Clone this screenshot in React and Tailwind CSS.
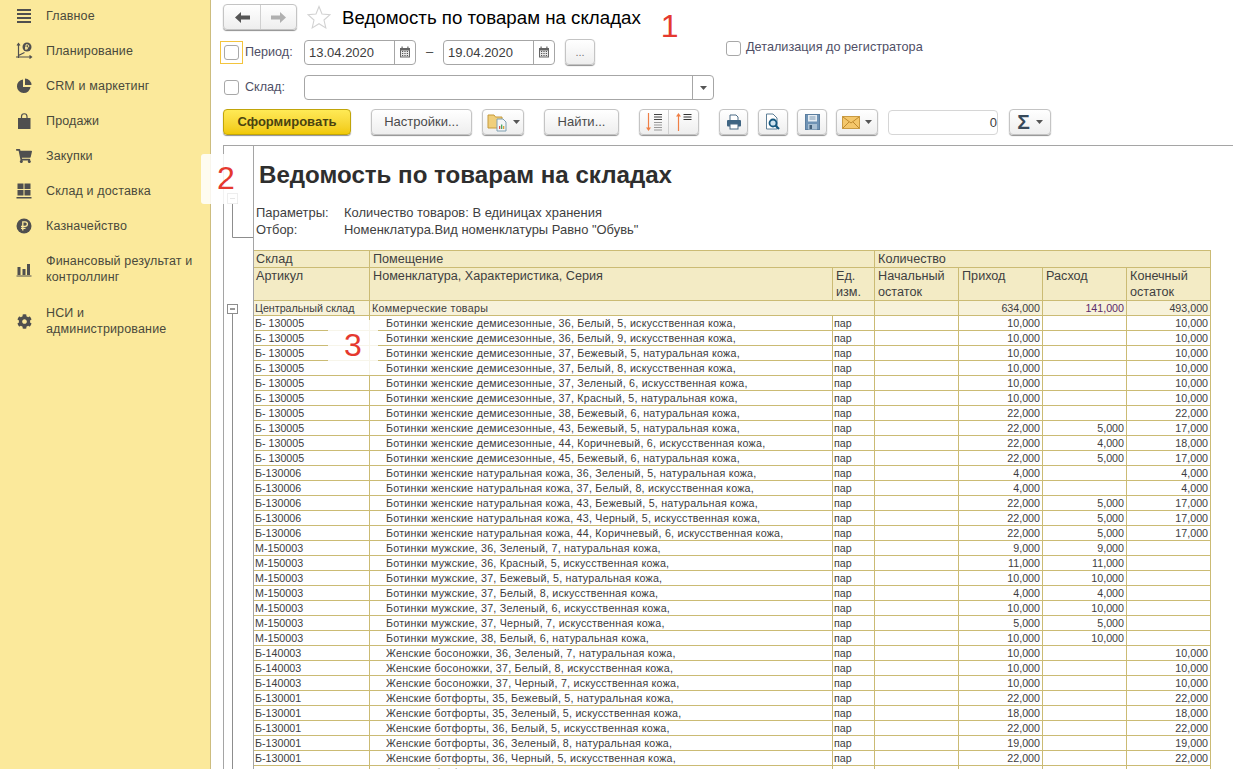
import React from "react";
import { FaShoppingCart, FaCog } from "react-icons/fa";

const IC = "#4f4f4f";

const IconMenu = () => (
  <svg width="16" height="16" viewBox="0 0 16 16" fill={IC}>
    <rect x="1" y="1" width="14" height="2" /><rect x="1" y="5" width="14" height="2" />
    <rect x="1" y="9" width="14" height="2" /><rect x="1" y="13" width="14" height="2" />
  </svg>
);
const IconPlan = () => (
  <svg width="18" height="18" viewBox="0 0 18 18" fill="none" stroke={IC} strokeWidth="1.2">
    <path d="M3.5 2v14M1 15h15M2 3.5l1.500-2 1.500 2M14.500 13.500l2 1.500-2 1.500M3.500 13.500l6-3" />
    <circle cx="12" cy="5" r="4.500" fill={IC} stroke="none" />
    <path d="M11 8V2.800h1.500a1.200 1.200 0 0 1 0 2.600H10M10 6.700h3" stroke="#FBE99B" strokeWidth="1" />
  </svg>
);
const IconPie = () => (
  <svg width="16" height="16" viewBox="0 0 16 16" fill={IC}>
    <path d="M7 1.500A6.800 6.800 0 1 0 14.500 9H7z" /><path d="M9 0.500A6.500 6.500 0 0 1 15.500 7H9z" />
  </svg>
);
const IconBag = () => (
  <svg width="16" height="16" viewBox="0 0 16 16" fill={IC}>
    <path d="M2 5h12.500v11H2z" /><path d="M5.500 6V3.500a2.700 2.700 0 0 1 5.500 0V6" fill="none" stroke={IC} strokeWidth="1.200" />
  </svg>
);
const IconGrid = () => (
  <svg width="16" height="16" viewBox="0 0 16 16" fill={IC}>
    <rect x="1.500" y="0.500" width="6" height="5.500" /><rect x="8.500" y="0.500" width="6" height="5.500" />
    <rect x="1.500" y="7" width="6" height="5.500" /><rect x="8.500" y="7" width="6" height="5.500" />
    <rect x="0.500" y="14" width="15" height="1.500" />
  </svg>
);
const IconRub = () => (
  <svg width="16" height="16" viewBox="0 0 16 16">
    <circle cx="8" cy="8" r="7.500" fill={IC} />
    <path d="M6.800 12.500V3.800h2.300a2.300 2.300 0 0 1 0 4.600H5M5 10.300h4.500" fill="none" stroke="#FBE99B" strokeWidth="1.300" />
  </svg>
);
const IconBars = () => (
  <svg width="16" height="16" viewBox="0 0 16 16" fill={IC}>
    <rect x="1.500" y="6" width="3" height="8" /><rect x="6.500" y="8" width="3" height="6" />
    <rect x="11" y="3" width="3" height="11" /><rect x="0.500" y="14.500" width="15" height="1" />
  </svg>
);

const menu = [
  { t: ["Главное"], i: <IconMenu /> },
  { t: ["Планирование"], i: <IconPlan /> },
  { t: ["CRM и маркетинг"], i: <IconPie /> },
  { t: ["Продажи"], i: <IconBag /> },
  { t: ["Закупки"], i: <FaShoppingCart size={16} color={IC} /> },
  { t: ["Склад и доставка"], i: <IconGrid /> },
  { t: ["Казначейство"], i: <IconRub /> },
  { t: ["Финансовый результат и", "контроллинг"], i: <IconBars /> },
  { t: ["НСИ и", "администрирование"], i: <FaCog size={15} color={IC} />, c: "mt-[1px]" },
];

const BTN = "flex items-center justify-center h-[26px] bg-linear-to-b from-white to-[#eeeeee] border border-[#c4c4c4] rounded-[4px] shadow-[0_1px_1px_#8f8f8f] text-[#4a4a4a] text-[13px]";

const Caret = () => (
  <svg width="7" height="4" viewBox="0 0 7 4" className="shrink-0"><path d="M0 0h7L3.500 4z" fill="#555" /></svg>
);
const Check = () => <span className="block w-[15px] h-[15px] border border-[#a8a8a8] rounded-[3px] bg-white" />;
const Cal = () => (
  <svg width="12" height="12" viewBox="0 0 12 12">
    <rect x="1" y="2" width="10" height="9.500" fill="#666" />
    <rect x="2.500" y="0.500" width="1.200" height="2.500" fill="#666" /><rect x="8.300" y="0.500" width="1.200" height="2.500" fill="#666" />
    <rect x="2" y="4.500" width="8" height="6" fill="#e8e8e8" />
    <path d="M3 5.500h1.200M5.400 5.500h1.200M7.800 5.500H9M3 7.500h1.200M5.400 7.500h1.200M7.800 7.500H9M3 9.500h1.200M5.400 9.500h1.200M7.800 9.500H9" stroke="#555" />
  </svg>
);
const DateField = ({ v }) => (
  <div className="flex h-[25px] w-[112px] border border-[#a6a6a6] rounded-[4px] bg-white">
    <span className="flex-1 pl-[4px] text-[13px] leading-[23px] text-[#3c3c3c]">{v}</span>
    <span className="w-[21px] flex items-center justify-center border-l border-[#a6a6a6]"><Cal /></span>
  </div>
);

const IconFolder = () => (
  <svg width="22" height="20" viewBox="0 0 22 20">
    <path d="M1 3h6l1.500 2H15v11H1z" fill="#f0cf7c" stroke="#c69a3a" />
    <path d="M10 7h6l3 3v9h-9z" fill="#f4f6f8" stroke="#7e9fb0" />
    <rect x="12" y="14" width="1.300" height="3" fill="#d9534f" /><rect x="14" y="12.500" width="1.300" height="4.500" fill="#4aa564" /><rect x="16" y="14" width="1.300" height="3" fill="#d9a03a" />
  </svg>
);
const SortDown = () => (
  <svg width="20" height="20" viewBox="0 0 20 20">
    <path d="M4.500 1v16" stroke="#ef7f45" strokeWidth="1.200" /><path d="M2 15.500h5L4.500 19z" fill="#ef7f45" />
    <path d="M10 2.500h8M10 5h8M10 7.500h8" stroke="#444" /><path d="M10 10.500h8M10 13h8M10 15.500h8M10 18h8" stroke="#999" />
  </svg>
);
const SortUp = () => (
  <svg width="20" height="20" viewBox="0 0 20 20">
    <path d="M4.500 3v16" stroke="#ef7f45" strokeWidth="1.200" /><path d="M2 4.500h5L4.500 1z" fill="#ef7f45" />
    <path d="M9.500 2.500h8M9.500 5h8M9.500 7.500h8" stroke="#333" />
  </svg>
);
const IconPrint = () => (
  <svg width="16" height="16" viewBox="0 0 16 16">
    <path d="M4 1h6l2 2v4H4z" fill="#fff" stroke="#4b6b85" />
    <rect x="1" y="6" width="14" height="6.500" rx="1" fill="#3f6583" />
    <rect x="4" y="10" width="8" height="5" fill="#fff" stroke="#4b6b85" />
  </svg>
);
const IconPreview = () => (
  <svg width="16" height="18" viewBox="0 0 16 18">
    <path d="M1.500 1H8l4 4v11H1.500z" fill="#fff" stroke="#5d7f97" />
    <circle cx="8" cy="10" r="3.500" fill="#cfe3ef" stroke="#14577f" strokeWidth="1.800" />
    <path d="M10.500 12.500l3.500 3.500" stroke="#14577f" strokeWidth="2.200" />
  </svg>
);
const IconSave = () => (
  <svg width="15" height="16" viewBox="0 0 15 16">
    <rect x="0.500" y="0.500" width="14" height="15" fill="#6f93b5" stroke="#5b7e9f" />
    <rect x="3" y="1" width="9" height="6.500" fill="#e6edf3" /><path d="M4.500 3h6M4.500 5h6" stroke="#7e9ab3" />
    <rect x="3" y="10" width="9" height="5.500" fill="#a9c0d4" /><rect x="4.500" y="11" width="2.500" height="4" fill="#44607a" />
  </svg>
);
const IconMail = () => (
  <svg width="18" height="13" viewBox="0 0 18 13">
    <rect x="0.500" y="0.500" width="17" height="12" fill="#f4c76b" stroke="#c99a41" />
    <path d="M1 1l8 6 8-6M1 12l6-6M17 12l-6-6" fill="none" stroke="#bf8a2f" />
  </svg>
);

const ROWS = (() => {
  const d = "Ботинки женские демисезонные, ";
  const n = "Ботинки женские натуральная кожа, ";
  const m = "Ботинки мужские, ";
  const s = "Женские босоножки, ";
  const b = "Женские ботфорты, ";
  const B5 = "Б- 130005", B6 = "Б-130006", M = "М-150003", B4 = "Б-140003", B1 = "Б-130001";
  return [
    [B5, d + "36, Белый, 5, искусственная кожа,", "10,000", "", "10,000"],
    [B5, d + "36, Белый, 9, искусственная кожа,", "10,000", "", "10,000"],
    [B5, d + "37, Бежевый, 5, натуральная кожа,", "10,000", "", "10,000"],
    [B5, d + "37, Белый, 8, искусственная кожа,", "10,000", "", "10,000"],
    [B5, d + "37, Зеленый, 6, искусственная кожа,", "10,000", "", "10,000"],
    [B5, d + "37, Красный, 5, натуральная кожа,", "10,000", "", "10,000"],
    [B5, d + "38, Бежевый, 6, натуральная кожа,", "22,000", "", "22,000"],
    [B5, d + "43, Бежевый, 5, натуральная кожа,", "22,000", "5,000", "17,000"],
    [B5, d + "44, Коричневый, 6, искусственная кожа,", "22,000", "4,000", "18,000"],
    [B5, d + "45, Бежевый, 6, натуральная кожа,", "22,000", "5,000", "17,000"],
    [B6, n + "36, Зеленый, 5, натуральная кожа,", "4,000", "", "4,000"],
    [B6, n + "37, Белый, 8, искусственная кожа,", "4,000", "", "4,000"],
    [B6, n + "43, Бежевый, 5, натуральная кожа,", "22,000", "5,000", "17,000"],
    [B6, n + "43, Черный, 5, искусственная кожа,", "22,000", "5,000", "17,000"],
    [B6, n + "44, Коричневый, 6, искусственная кожа,", "22,000", "5,000", "17,000"],
    [M, m + "36, Зеленый, 7, натуральная кожа,", "9,000", "9,000", ""],
    [M, m + "36, Красный, 5, искусственная кожа,", "11,000", "11,000", ""],
    [M, m + "37, Бежевый, 5, натуральная кожа,", "10,000", "10,000", ""],
    [M, m + "37, Белый, 8, искусственная кожа,", "4,000", "4,000", ""],
    [M, m + "37, Зеленый, 6, искусственная кожа,", "10,000", "10,000", ""],
    [M, m + "37, Черный, 7, искусственная кожа,", "5,000", "5,000", ""],
    [M, m + "38, Белый, 6, натуральная кожа,", "10,000", "10,000", ""],
    [B4, s + "36, Зеленый, 7, натуральная кожа,", "10,000", "", "10,000"],
    [B4, s + "37, Белый, 8, искусственная кожа,", "10,000", "", "10,000"],
    [B4, s + "37, Черный, 7, искусственная кожа,", "10,000", "", "10,000"],
    [B1, b + "35, Бежевый, 5, натуральная кожа,", "22,000", "", "22,000"],
    [B1, b + "35, Зеленый, 5, искусственная кожа,", "18,000", "", "18,000"],
    [B1, b + "36, Белый, 5, искусственная кожа,", "22,000", "", "22,000"],
    [B1, b + "36, Зеленый, 8, натуральная кожа,", "19,000", "", "19,000"],
    [B1, b + "36, Черный, 5, искусственная кожа,", "22,000", "", "22,000"],
    [B1, b + "37, Белый, 5, искусственная кожа,", "22,000", "", "22,000"],
  ];
})();

const CELL = "h-[15px] p-0 border-r border-b border-[#cbbb74] text-[10.7px] leading-[14px] text-[#3d3d3d] whitespace-nowrap overflow-hidden";
const HEAD = "p-0 pr-[2px] border-r border-b border-[#cbbb74] bg-[#f3ebc5] text-[12.65px] text-[#3f3f3f] align-top font-normal text-left";
const H1 = HEAD + " border-t pt-[1px] leading-[15px]";
const H2 = HEAD + " leading-[16px]";

export default function App() {
  return (
    <div className="relative flex w-[1233px] h-[769px] overflow-hidden bg-white font-['Liberation_Sans',Arial,sans-serif]">
      {/* sidebar */}
      <nav className="w-[211px] shrink-0 bg-[#fbe99b] border-r border-[#cdbd7f] pt-[8px] flex flex-col gap-[19px]">
        {menu.map((m) => (
          <div key={m.t[0]} className={"flex items-center " + (m.c || "")}>
            <span className="w-[46px] h-[16px] pl-[2px] flex items-center justify-center shrink-0">{m.i}</span>
            <span className="text-[12.5px] tracking-[0.15px] leading-[16px] text-[#4a4a3c]">
              {m.t.map((l) => <span key={l} className="block whitespace-nowrap">{l}</span>)}
            </span>
          </div>
        ))}
      </nav>

      {/* main */}
      <main className="flex-1 min-w-0 flex flex-col">
        <div className="flex items-center h-[24px] mt-[5px] ml-[12px]">
          <div className={BTN + " w-[74px] h-[24px] !justify-start"}>
            <span className="w-[37px] flex justify-center border-r border-[#d0d0d0] h-full items-center">
              <svg width="15" height="11" viewBox="0 0 15 11"><path d="M6 0v3.500h9v4H6V11L0 5.500z" fill="#555" /></svg>
            </span>
            <span className="flex-1 flex justify-center">
              <svg width="15" height="11" viewBox="0 0 15 11"><path d="M9 0v3.500H0v4h9V11l6-5.500z" fill="#b0b0b0" /></svg>
            </span>
          </div>
          <svg width="24" height="24" viewBox="0 0 24 24" className="ml-[10px]">
            <path d="M12 1.500l3 7.500 8 .7-6 5.300 1.800 7.900L12 18.700 5.200 22.900 7 15 1 9.700l8-.7z" fill="#fff" stroke="#d2d2d2" strokeWidth="1.100" />
          </svg>
          <h1 className="ml-[11px] mt-[2px] text-[18.7px] font-normal text-black whitespace-nowrap">Ведомость по товарам на складах</h1>
          <span className="ml-[20px] mt-[18px] text-[32px] leading-[32px] text-[#e5392f]">1</span>
        </div>

        <div className="flex items-center h-[26px] mt-[10px] ml-[9px] relative">
          <span className="w-[23px] h-[23px] flex items-center justify-center border border-[#f3c43d]"><Check /></span>
          <span className="ml-[2px] w-[59px] text-[12.6px] text-[#4f4f66]">Период:</span>
          <DateField v="13.04.2020" />
          <span className="w-[27px] text-center text-[13px] text-[#444]">–</span>
          <DateField v="19.04.2020" />
          <span className={BTN + " ml-[10px] w-[30px] text-[#777] !text-[11px]"}>...</span>
          <span className="ml-[131px] -mt-[8px]"><Check /></span>
          <span className="ml-[5px] -mt-[8px] text-[12.7px] text-[#4f4f66] whitespace-nowrap">Детализация до регистратора</span>
        </div>

        <div className="flex items-center h-[25px] mt-[10px] ml-[13px]">
          <Check />
          <span className="ml-[6px] w-[59px] text-[12.6px] text-[#4f4f66]">Склад:</span>
          <div className="flex h-[25px] w-[410px] border border-[#a6a6a6] rounded-[4px] bg-white">
            <span className="flex-1" />
            <span className="w-[21px] flex items-center justify-center border-l border-[#a6a6a6]"><Caret /></span>
          </div>
        </div>

        <div className="flex items-center h-[26px] mt-[9px] ml-[12px]">
          <span className="flex items-center justify-center h-[26px] w-[128px] bg-linear-to-b from-[#ffea55] to-[#f1c900] border border-[#c1a50a] rounded-[4px] shadow-[0_1px_1px_#8f8f8f] text-[13px] font-bold text-[#4a4310]">Сформировать</span>
          <span className={BTN + " ml-[20px] w-[101px]"}>Настройки...</span>
          <span className={BTN + " ml-[10px] w-[42px] gap-[4px]"}><IconFolder /><Caret /></span>
          <span className={BTN + " ml-[20px] w-[75px]"}>Найти...</span>
          <span className={BTN + " ml-[20px] w-[60px]"}>
            <span className="w-[30px] h-full flex items-center justify-center border-r border-[#d0d0d0]"><SortDown /></span>
            <span className="w-[30px] flex justify-center"><SortUp /></span>
          </span>
          <span className={BTN + " ml-[20px] w-[29px]"}><IconPrint /></span>
          <span className={BTN + " ml-[10px] w-[30px]"}><IconPreview /></span>
          <span className={BTN + " ml-[9px] w-[30px]"}><IconSave /></span>
          <span className={BTN + " ml-[9px] w-[42px] gap-[5px]"}><IconMail /><Caret /></span>
          <span className="ml-[10px] w-[110px] h-[25px] border border-[#d6d6d6] rounded-[4px] text-right text-[13px] leading-[23px] text-[#3c3c3c]">0</span>
          <span className={BTN + " ml-[11px] w-[42px] gap-[6px]"}>
            <span className="text-[21px] leading-[24px] font-bold text-[#37495a]">Σ</span><Caret />
          </span>
        </div>

        {/* report */}
        <div className="flex-1 min-h-0 mt-[10px] ml-[12px] flex border-l border-t border-[#a5a5a5] overflow-hidden">
          <div className="w-[30px] shrink-0 border-r border-[#a5a5a5]">
            <svg width="29" height="640" viewBox="0 0 29 640" fill="none">
              <rect x="3.500" y="47.500" width="10" height="10" fill="#fff" stroke="#8d8d8d" />
              <path d="M6 52.500h5" stroke="#555" />
              <path d="M8.500 58v33.500H29" stroke="#8d8d8d" />
              <rect x="3.500" y="158.500" width="10" height="9" fill="#fff" stroke="#8d8d8d" />
              <path d="M6 163h5" stroke="#333" />
              <path d="M8.500 168v472" stroke="#8d8d8d" />
            </svg>
          </div>
          <div className="flex-1 min-w-0">
            <h2 className="mt-[16px] ml-[5px] text-[24.1px] leading-[26px] font-bold text-[#2e2e2e] whitespace-nowrap">Ведомость по товарам на складах</h2>
            <div className="mt-[16px] ml-[2px] text-[12.95px] leading-[17px] text-[#3f3f3f]">
              <div className="flex"><span className="w-[88px]">Параметры:</span><span>Количество товаров: В единицах хранения</span></div>
              <div className="flex"><span className="w-[88px]">Отбор:</span><span>Номенклатура.Вид номенклатуры Равно "Обувь"</span></div>
            </div>
            <table className="mt-[12px] table-fixed w-[957px] border-separate border-spacing-0">
              <colgroup>
                <col className="w-[116px]" /><col className="w-[463px]" /><col className="w-[42px]" />
                <col className="w-[84px]" /><col className="w-[84px]" /><col className="w-[84px]" /><col className="w-[84px]" />
              </colgroup>
              <thead>
                <tr>
                  <th className={H1 + " h-[18px] pl-[2px]"}>Склад</th>
                  <th className={H1 + " pl-[3px]"} colSpan={2}>Помещение</th>
                  <th className={H1 + " pl-[3px]"} colSpan={4}>Количество</th>
                </tr>
                <tr>
                  <th className={H2 + " h-[33px] pl-[2px]"}>Артикул</th>
                  <th className={H2 + " pl-[3px]"}>Номенклатура, Характеристика, Серия</th>
                  <th className={H2 + " pl-[3px]"}>Ед. изм.</th>
                  <th className={H2 + " pl-[3px]"}>Начальный остаток</th>
                  <th className={H2 + " pl-[3px]"}>Приход</th>
                  <th className={H2 + " pl-[3px]"}>Расход</th>
                  <th className={H2 + " pl-[3px]"}>Конечный остаток</th>
                </tr>
              </thead>
              <tbody>
                <tr className="bg-[#f7f2da]">
                  <td className={CELL + " pl-[1px]"}>Центральный склад</td>
                  <td className={CELL + " pl-[2px] tracking-[0.28px]"} colSpan={2}>Коммерческие товары</td>
                  <td className={CELL} />
                  <td className={CELL + " text-right pr-[2px]"}>634,000</td>
                  <td className={CELL + " text-right pr-[2px] !text-[#5b2a6a]"}>141,000</td>
                  <td className={CELL + " text-right pr-[2px]"}>493,000</td>
                </tr>
                {ROWS.map((r, i) => (
                  <tr key={i}>
                    <td className={CELL + " pl-[1px]"}>{r[0]}</td>
                    <td className={CELL + " pl-[16px] tracking-[0.23px]"}>{r[1]}</td>
                    <td className={CELL + " pl-[1px]"}>пар</td>
                    <td className={CELL} />
                    <td className={CELL + " text-right pr-[2px]"}>{r[2]}</td>
                    <td className={CELL + " text-right pr-[2px]"}>{r[3]}</td>
                    <td className={CELL + " text-right pr-[2px]"}>{r[4]}</td>
                  </tr>
                ))}
              </tbody>
            </table>
          </div>
        </div>
      </main>

      {/* callout markers laid over the page */}
      <div className="absolute left-[201px] top-[154px] w-[39px] h-[50px] rounded-[3px] bg-white/85 flex items-center pl-[16px] pb-[2px] text-[32px] text-[#e5392f]">2</div>
      <div className="absolute left-[328px] top-[320px] w-[50px] h-[55px] bg-white/85 flex items-center justify-center pb-[5px] text-[32px] text-[#e5392f]">3</div>
    </div>
  );
}
